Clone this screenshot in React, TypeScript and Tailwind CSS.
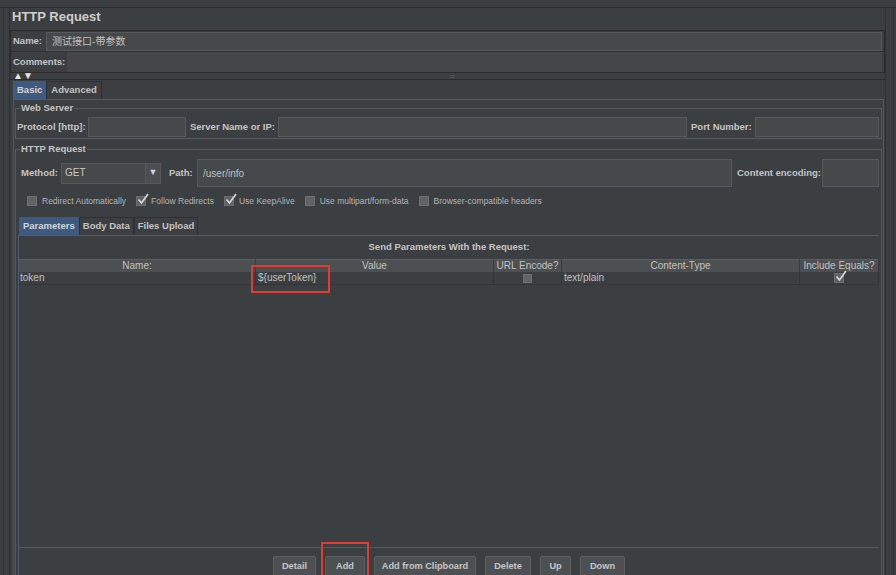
import React from 'react';

const FONT = 'font-["Liberation_Sans","Noto_Sans_CJK_SC",sans-serif]';

const Check: React.FC<{ on?: boolean }> = ({ on }) => (
  <span className="relative inline-block w-[10px] h-[10px] shrink-0 bg-[#5f6264] border border-[#6c6f71]">
    {on && (
      <svg viewBox="0 0 12 12" className="absolute -top-[4px] left-[0px] w-[12px] h-[12px]">
        <path d="M1.5 6.5 L4.5 10 L11 1" stroke="#d8d8d8" strokeWidth="1.7" fill="none" />
      </svg>
    )}
  </span>
);

const Option: React.FC<{ label: string; on?: boolean }> = ({ label, on }) => (
  <div className="flex items-center gap-[5px]">
    <Check on={on} />
    <span className="text-[8.5px] text-[#b4b4b4]">{label}</span>
  </div>
);

const Label: React.FC<{ children: React.ReactNode; className?: string }> = ({ children, className }) => (
  <span className={`text-[9.5px] font-bold text-[#c4c4c4] whitespace-nowrap ${className ?? ''}`}>{children}</span>
);

const Field: React.FC<{ className?: string; children?: React.ReactNode }> = ({ className, children }) => (
  <div className={`bg-[#45494a] border border-[#56595b] flex items-center pl-[5px] text-[10px] text-[#c0c0c0] ${className ?? ''}`}>
    {children}
  </div>
);

const columns = [
  { name: 'Name:', w: 'w-[237px]' },
  { name: 'Value', w: 'w-[238px]' },
  { name: 'URL Encode?', w: 'w-[68px]' },
  { name: 'Content-Type', w: 'w-[238px]' },
  { name: 'Include Equals?', w: 'w-[79px]' },
];

const buttons = [
  { label: 'Detail', w: 'w-[43px]' },
  { label: 'Add', w: 'w-[40px]', marked: true },
  { label: 'Add from Clipboard', w: 'w-[102px]' },
  { label: 'Delete', w: 'w-[46px]' },
  { label: 'Up', w: 'w-[31px]' },
  { label: 'Down', w: 'w-[45px]' },
];

export default function App() {
  return (
    <div className={`w-[896px] h-[575px] overflow-hidden bg-[#3c3f41] text-[#bbbbbb] ${FONT} pt-[7px]`}>
      <div className="flex h-full border-t border-[#2c2e30] pl-[3px]">
        <div className="flex h-full border-l border-[#2f3133] pl-[5px]">
          <div className="w-[877px] h-full border-l border-r border-[#2c2e30]">
            {/* title */}
            <div className="h-[22px] pl-[2px] pt-[1px] text-[13px] leading-[16px] font-bold text-[#cfcfcf]">HTTP Request</div>

            {/* name / comments */}
            <div className="h-[43px] border border-[#2b2b2b] flex flex-col">
              <div className="h-[21px] shrink-0 flex items-center pl-[2px] pr-[2px] gap-[4px] border-b border-[#2f3133]">
                <Label>Name:</Label>
                <Field className="flex-1 h-[19px]">
                  <span className="text-[10px]">测试接口-带参数</span>
                </Field>
              </div>
              <div className="flex-1 flex items-center pl-[2px] pr-[2px] gap-[2px]">
                <Label>Comments:</Label>
                <div className="flex-1 h-full bg-[#43474a]" />
              </div>
            </div>

            {/* split arrows */}
            <div className="h-[7px] flex items-center border-b border-[#2b2b2b] relative">
              <span className="pl-[3px] text-[10px] leading-[6px] text-[#e6e6e6]">▲▼</span>
              <span className="absolute left-[440px] top-[1px] text-[5px] leading-[5px] text-[#9a9a9a] tracking-[-0.5px]">:::::</span>
            </div>

            {/* main tabs */}
            <div className="flex pl-[3px] pt-[1px] h-[19px]">
              <div className="h-[18px] px-[4px] flex items-center bg-[#3e5a80] text-[9.5px] font-bold text-[#d4d4d4]">Basic</div>
              <div className="h-[18px] px-[4px] flex items-end pb-[2px] border border-b-0 border-[#2e3032] text-[9.5px] font-bold text-[#c4c4c4]">Advanced</div>
            </div>

            <div className="ml-[3px] mr-[1px] border-t border-[#4a5c72] border-l border-r border-l-[#54575a] border-r-[#54575a] px-[1px]">
              {/* Web Server */}
              <fieldset className="border border-[#585b5d] mt-[2px] px-[1px] pb-[1px]">
                <legend className="ml-[3px] px-[1px] text-[9.5px] leading-[12px] font-bold text-[#c4c4c4]">Web Server</legend>
                <div className="flex items-center h-[20px] mt-[3px]">
                  <Label className="w-[71px]">Protocol [http]:</Label>
                  <Field className="w-[98px] h-[20px]" />
                  <Label className="ml-[4px] w-[88px]">Server Name or IP:</Label>
                  <Field className="flex-1 h-[20px]" />
                  <Label className="ml-[4px] w-[64px]">Port Number:</Label>
                  <Field className="w-[124px] h-[20px] mr-[1px]" />
                </div>
              </fieldset>

              {/* HTTP Request */}
              <fieldset className="border border-[#585b5d] mt-[4px] px-[1px] pb-[20px]">
                <legend className="ml-[3px] px-[1px] text-[9.5px] leading-[12px] font-bold text-[#c4c4c4]">HTTP Request</legend>
                <div className="flex items-center h-[28px] mt-[4px] pl-[4px]">
                  <Label className="w-[40px]">Method:</Label>
                  <div className="w-[100px] h-[21px] flex border border-[#56595b] bg-[#45494a]">
                    <span className="flex-1 pl-[3px] text-[10px] leading-[18px] text-[#c8c8c8]">GET</span>
                    <span className="w-[15px] flex items-center justify-center border-l border-[#56595b] bg-[#4a4e50] text-[9px] text-[#d0d0d0]">▼</span>
                  </div>
                  <Label className="ml-[8px] w-[28px]">Path:</Label>
                  <Field className="flex-1 h-[28px]">/user/info</Field>
                  <Label className="ml-[5px] w-[85px]">Content encoding:</Label>
                  <Field className="w-[57px] h-[28px] mr-[1px]" />
                </div>

                <div className="flex items-center h-[14px] mt-[7px] pl-[10px] gap-[10px]">
                  <Option label="Redirect Automatically" />
                  <Option label="Follow Redirects" on />
                  <Option label="Use KeepAlive" on />
                  <Option label="Use multipart/form-data" />
                  <Option label="Browser-compatible headers" />
                </div>

                {/* sub tabs */}
                <div className="flex pl-[2px] mt-[9px] h-[18px]">
                  <div className="h-[18px] px-[4px] flex items-center bg-[#3e5a80] text-[9.5px] font-bold text-[#d4d4d4]">Parameters</div>
                  <div className="h-[18px] px-[3px] flex items-end pb-[2px] border border-b-0 border-[#2e3032] text-[9.5px] font-bold text-[#c4c4c4]">Body Data</div>
                  <div className="h-[18px] px-[3px] flex items-end pb-[2px] border border-b-0 border-[#2e3032] text-[9.5px] font-bold text-[#c4c4c4]">Files Upload</div>
                </div>

                <div className="ml-[1px] mr-[1px] border-t border-[#4a5c72] border-l border-[#2e3032]">
                  <div className="h-[23px] flex items-center justify-center">
                    <Label>Send Parameters With the Request:</Label>
                  </div>
                  <div className="w-[860px]">
                    <div className="flex h-[13px] bg-[#4d5052]">
                      {columns.map((c) => (
                        <div
                          key={c.name}
                          className={`${c.w} border-r border-t border-[#393b3d] border-t-[#5c5f61] flex items-center justify-center text-[10px] leading-[12px] text-[#c2c2c2]`}
                        >
                          {c.name}
                        </div>
                      ))}
                    </div>
                    <div className="flex h-[13px] border-b border-[#333537] text-[10px] text-[#c0c0c0]">
                      <div className="w-[237px] border-r border-[#333537] pl-[1px] leading-[12px]">token</div>
                      <div className="w-[238px] border-r border-[#333537] pl-[2px] leading-[12px] relative">
                        ${'{'}userToken{'}'}
                        <div className="absolute -left-[5px] -top-[7px] w-[79px] h-[28px] border-2 border-[#e33a32]" />
                      </div>
                      <div className="w-[68px] border-r border-[#333537] flex items-center justify-center">
                        <span className="inline-block w-[9px] h-[9px] bg-[#626567] border border-[#6c6f71]" />
                      </div>
                      <div className="w-[238px] border-r border-[#333537] pl-[2px] leading-[12px]">text/plain</div>
                      <div className="w-[79px] border-r border-[#333537] flex items-center justify-center">
                        <Check on />
                      </div>
                    </div>
                  </div>
                  <div className="h-[262px]" />
                  <div className="border-t border-[#56595b] flex justify-center gap-[9px] pt-[8px]">
                    {buttons.map((b) => (
                      <div
                        key={b.label}
                        className={`${b.w} relative h-[22px] rounded-[2px] bg-[#4c5052] border border-[#5c5f61] flex items-center justify-center text-[9.2px] font-bold text-[#c6c6c6]`}
                      >
                        {b.label}
                        {b.marked && (
                          <div className="absolute -left-[5px] -top-[15px] w-[48px] h-[40px] border-2 border-[#e33a32]" />
                        )}
                      </div>
                    ))}
                  </div>
                </div>
              </fieldset>
            </div>
          </div>
          <div className="w-[8px] border-r border-[#2c2e30]" />
        </div>
      </div>
    </div>
  );
}
